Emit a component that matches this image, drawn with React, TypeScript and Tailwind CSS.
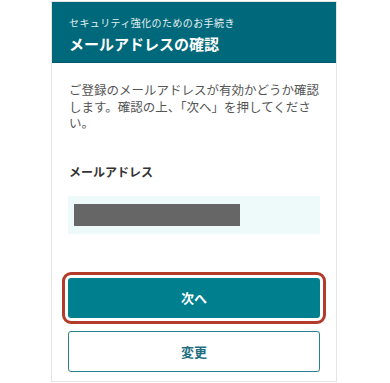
export default function App() {
  return (
    <div
      className="min-h-screen bg-white pt-px"
      style={{ fontFamily: '"Noto Sans CJK JP", "Noto Sans", sans-serif' }}
    >
      <div className="ml-[51px] w-[286px] border border-[#e4e4e4] bg-white">
        {/* Header */}
        <div className="h-[61px] border-b border-[#00586a] bg-[#00687b] px-[17px] pt-[13px]">
          <p className="text-[10px] leading-[16px] tracking-[0.04em] text-white/90">セキュリティ強化のためのお手続き</p>
          <h1 className="mt-[2px] text-[15px] font-bold leading-[22px] text-white">メールアドレスの確認</h1>
        </div>

        {/* Body */}
        <div className="px-[16px] pt-[19px] pb-[9px]">
          <p className="pl-[1px] text-[12.5px] leading-[16.7px] text-[#555]">
            ご登録のメールアドレスが有効かどうか確認します。確認の上、「次へ」を押してください。
          </p>

          <p className="mt-[32px] pl-[1px] text-[12px] font-bold leading-[16px] text-[#333]">メールアドレス</p>

          <div className="mt-[16px] flex h-[38px] items-center bg-[#eef9fa] px-[6px]">
            <div className="h-[22px] w-[166px] bg-[#666666]" />
          </div>

          <button className="mt-[44px] flex h-[40px] w-full items-center justify-center rounded-[3px] bg-[#00808f] text-[13px] font-bold text-white outline-[3px] outline-offset-[3px] outline-[#b23b29] outline-solid">
            次へ
          </button>

          <button className="mt-[13px] flex h-[41px] w-full items-center justify-center rounded-[3px] border-[1.5px] border-[#2a7f8e] bg-white text-[13px] font-bold text-[#1f6f7f]">
            変更
          </button>
        </div>
      </div>
    </div>
  );
}
